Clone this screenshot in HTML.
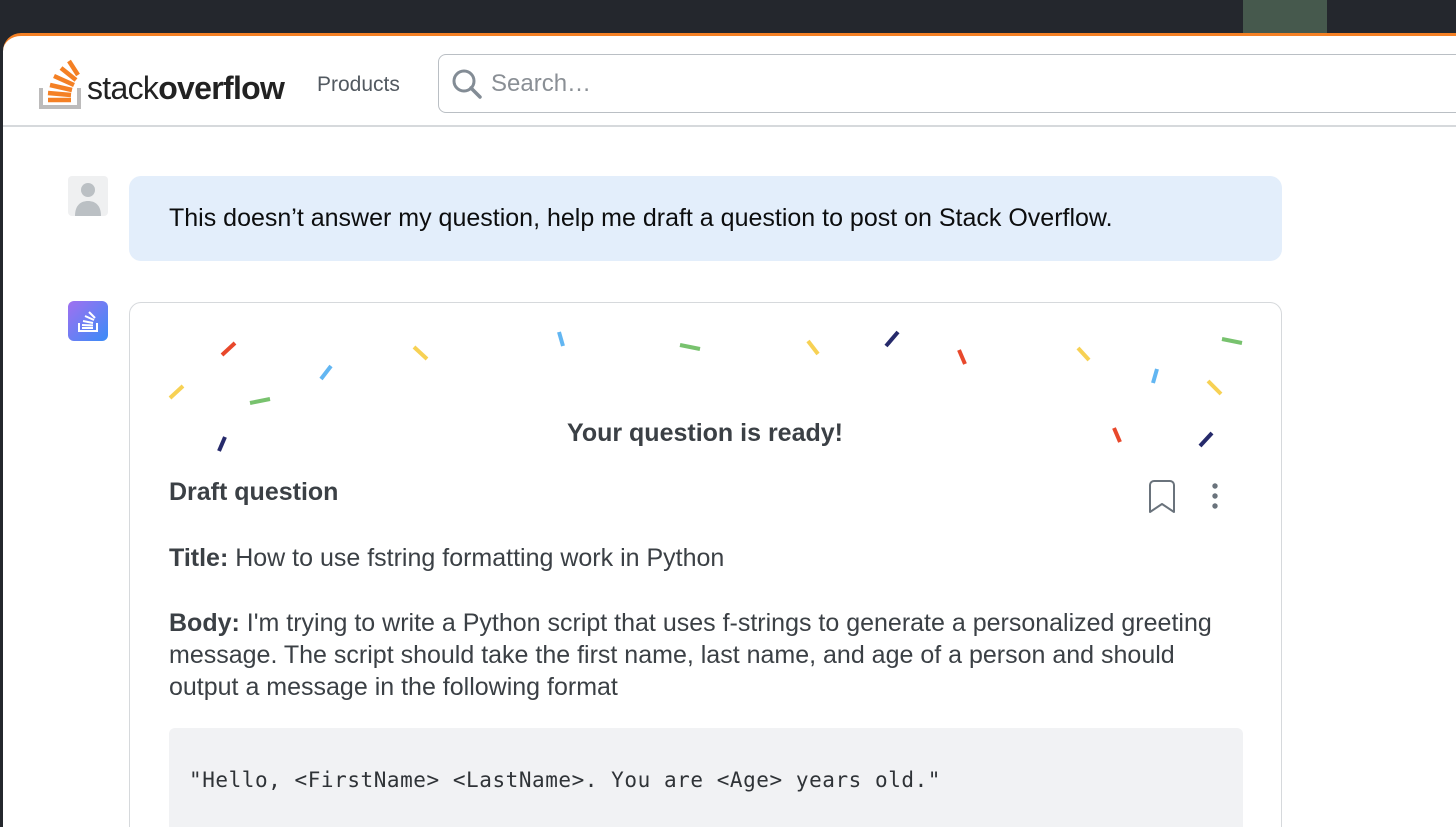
<!DOCTYPE html>
<html><head><meta charset="utf-8"><style>
*{margin:0;padding:0;box-sizing:border-box}
html,body{width:1456px;height:827px;overflow:hidden}
body{background:#24272d;font-family:"Liberation Sans",Arial,sans-serif;position:relative}
.tab{position:absolute;left:1243px;top:0;width:84px;height:34px;background:#46594d}
.win{position:absolute;left:3px;top:33px;width:1453px;height:794px;background:#fff;border-top:3px solid #f48024;border-top-left-radius:18px;overflow:hidden}
.hdr{position:absolute;left:0;top:0;width:100%;height:91px;border-bottom:2px solid #d6d9dc}
.logo{position:absolute;left:36px;top:22px}
.wm{position:absolute;left:84px;top:34px;font-size:32px;color:#222;letter-spacing:-0.7px}
.wm b{font-weight:700}
.prod{position:absolute;left:314px;top:37px;font-size:21px;color:#525960}
.search{position:absolute;left:435px;top:18px;width:1100px;height:59px;border:1.5px solid #babfc4;border-radius:8px}
.search span{position:absolute;left:52px;top:15px;font-size:24px;color:#8a8f95}
.av1{position:absolute;left:65px;top:140px;width:40px;height:40px;background:#eff0f1;border-radius:4px;overflow:hidden}
.bubble{position:absolute;left:126px;top:140px;width:1153px;height:85px;background:#e3eefb;border-radius:12px;font-size:25px;color:#0c0d0e;padding:28px 40px}
.av2{position:absolute;left:65px;top:265px;width:40px;height:40px;border-radius:6px;background:linear-gradient(135deg,#a070f0,#3a8cf7)}
.card{position:absolute;left:126px;top:266px;width:1153px;height:600px;border:1.5px solid #d6d9dc;border-radius:12px}
.t{position:absolute;color:#3b4045}
.code{position:absolute;left:39px;top:425px;width:1074px;height:120px;background:#f1f2f4;border-radius:6px;font-family:"DejaVu Sans Mono","Liberation Mono",monospace;font-size:21px;letter-spacing:0.55px;color:#2f3337;padding:40px 20px}
</style></head><body>
<div class="tab"></div>
<div class="win">
 <div class="hdr">
  <svg class="logo" width="42" height="52" viewBox="0 0 42 52">
   <path d="M2 30v19h38V30" fill="none" stroke="#bcbbbb" stroke-width="4"/>
   <g stroke="#f48024" stroke-width="4.5">
    <line x1="9" y1="42" x2="32" y2="42"/>
    <line x1="9" y1="35" x2="32" y2="37"/>
    <line x1="11" y1="27" x2="33" y2="32"/>
    <line x1="15" y1="18" x2="35" y2="27"/>
    <line x1="22" y1="10" x2="37" y2="22"/>
    <line x1="30" y1="3" x2="39" y2="17"/>
   </g>
  </svg>
  <div class="wm">stack<b>overflow</b></div>
  <div class="prod">Products</div>
  <div class="search">
   <svg style="position:absolute;left:12px;top:13px" width="32" height="32" viewBox="0 0 32 32"><circle cx="13" cy="13" r="10" fill="none" stroke="#838c95" stroke-width="3"/><line x1="20" y1="20" x2="29" y2="29" stroke="#838c95" stroke-width="3.5" stroke-linecap="round"/></svg>
   <span>Search…</span>
  </div>
 </div>
 <div class="av1"><svg width="40" height="40"><circle cx="20" cy="14" r="7" fill="#bbc0c4"/><path d="M7 40c0-11 6-15 13-15s13 4 13 15z" fill="#bbc0c4"/></svg></div>
 <div class="bubble">This doesn’t answer my question, help me draft a question to post on Stack Overflow.</div>
 <div class="av2"><svg width="40" height="40" viewBox="0 0 40 40"><path d="M11 22v8h18v-8" fill="none" stroke="#fff" stroke-width="2"/><g stroke="#fff" stroke-width="2"><line x1="14" y1="27" x2="25" y2="27"/><line x1="14" y1="24" x2="25" y2="24.5"/><line x1="15" y1="20" x2="25" y2="22"/><line x1="17" y1="15" x2="26" y2="19"/><line x1="21" y1="11" x2="27" y2="17"/></g></svg></div>
 <div class="card">
  <svg style="position:absolute;left:-130px;top:-300px" width="1300" height="500">
   <g stroke-width="4">
   <line x1="222" y1="352" x2="235" y2="340" stroke="#e8482b"/>
   <line x1="170" y1="395" x2="183" y2="383" stroke="#f7d154"/>
   <line x1="250" y1="400" x2="270" y2="396" stroke="#78c26e"/>
   <line x1="321" y1="376" x2="331" y2="363" stroke="#62b6f2"/>
   <line x1="414" y1="344" x2="427" y2="356" stroke="#f7d154"/>
   <line x1="559" y1="329" x2="563" y2="343" stroke="#62b6f2"/>
   <line x1="680" y1="342" x2="700" y2="346" stroke="#78c26e"/>
   <line x1="808" y1="338" x2="818" y2="351" stroke="#f7d154"/>
   <line x1="886" y1="343" x2="898" y2="329" stroke="#262a6b"/>
   <line x1="959" y1="347" x2="965" y2="361" stroke="#e8482b"/>
   <line x1="1078" y1="345" x2="1089" y2="357" stroke="#f7d154"/>
   <line x1="1153" y1="380" x2="1157" y2="366" stroke="#62b6f2"/>
   <line x1="1222" y1="336" x2="1242" y2="340" stroke="#78c26e"/>
   <line x1="1208" y1="378" x2="1221" y2="391" stroke="#f7d154"/>
   <line x1="1114" y1="425" x2="1120" y2="439" stroke="#e8482b"/>
   <line x1="1200" y1="443" x2="1212" y2="430" stroke="#262a6b"/>
   <line x1="219" y1="448" x2="225" y2="434" stroke="#262a6b"/>
   </g>
  </svg>
  <div class="t" style="left:0;width:1150px;text-align:center;top:116px;font-size:25px;font-weight:700">Your question is ready!</div>
  <div class="t" style="left:39px;top:175px;font-size:25px;font-weight:700">Draft question</div>
  <svg style="position:absolute;left:1017px;top:176px" width="30" height="36" viewBox="0 0 30 36"><path d="M3 33V6a4 4 0 0 1 4-4h16a4 4 0 0 1 4 4v27l-12-8z" fill="none" stroke="#6a737c" stroke-width="2" stroke-linejoin="round"/></svg>
  <svg style="position:absolute;left:1080px;top:178px" width="10" height="32"><circle cx="5" cy="5" r="2.7" fill="#6a737c"/><circle cx="5" cy="15" r="2.7" fill="#6a737c"/><circle cx="5" cy="25" r="2.7" fill="#6a737c"/></svg>
  <div class="t" style="left:39px;top:241px;font-size:25px"><b>Title:</b> How to use fstring formatting work in Python</div>
  <div class="t" style="left:39px;top:304px;width:1060px;font-size:25px;line-height:32px"><b>Body:</b> I'm trying to write a Python script that uses f-strings to generate a personalized greeting message. The script should take the first name, last name, and age of a person and should output a message in the following format</div>
  <div class="code">"Hello, &lt;FirstName&gt; &lt;LastName&gt;. You are &lt;Age&gt; years old."</div>
 </div>
</div>
</body></html>
